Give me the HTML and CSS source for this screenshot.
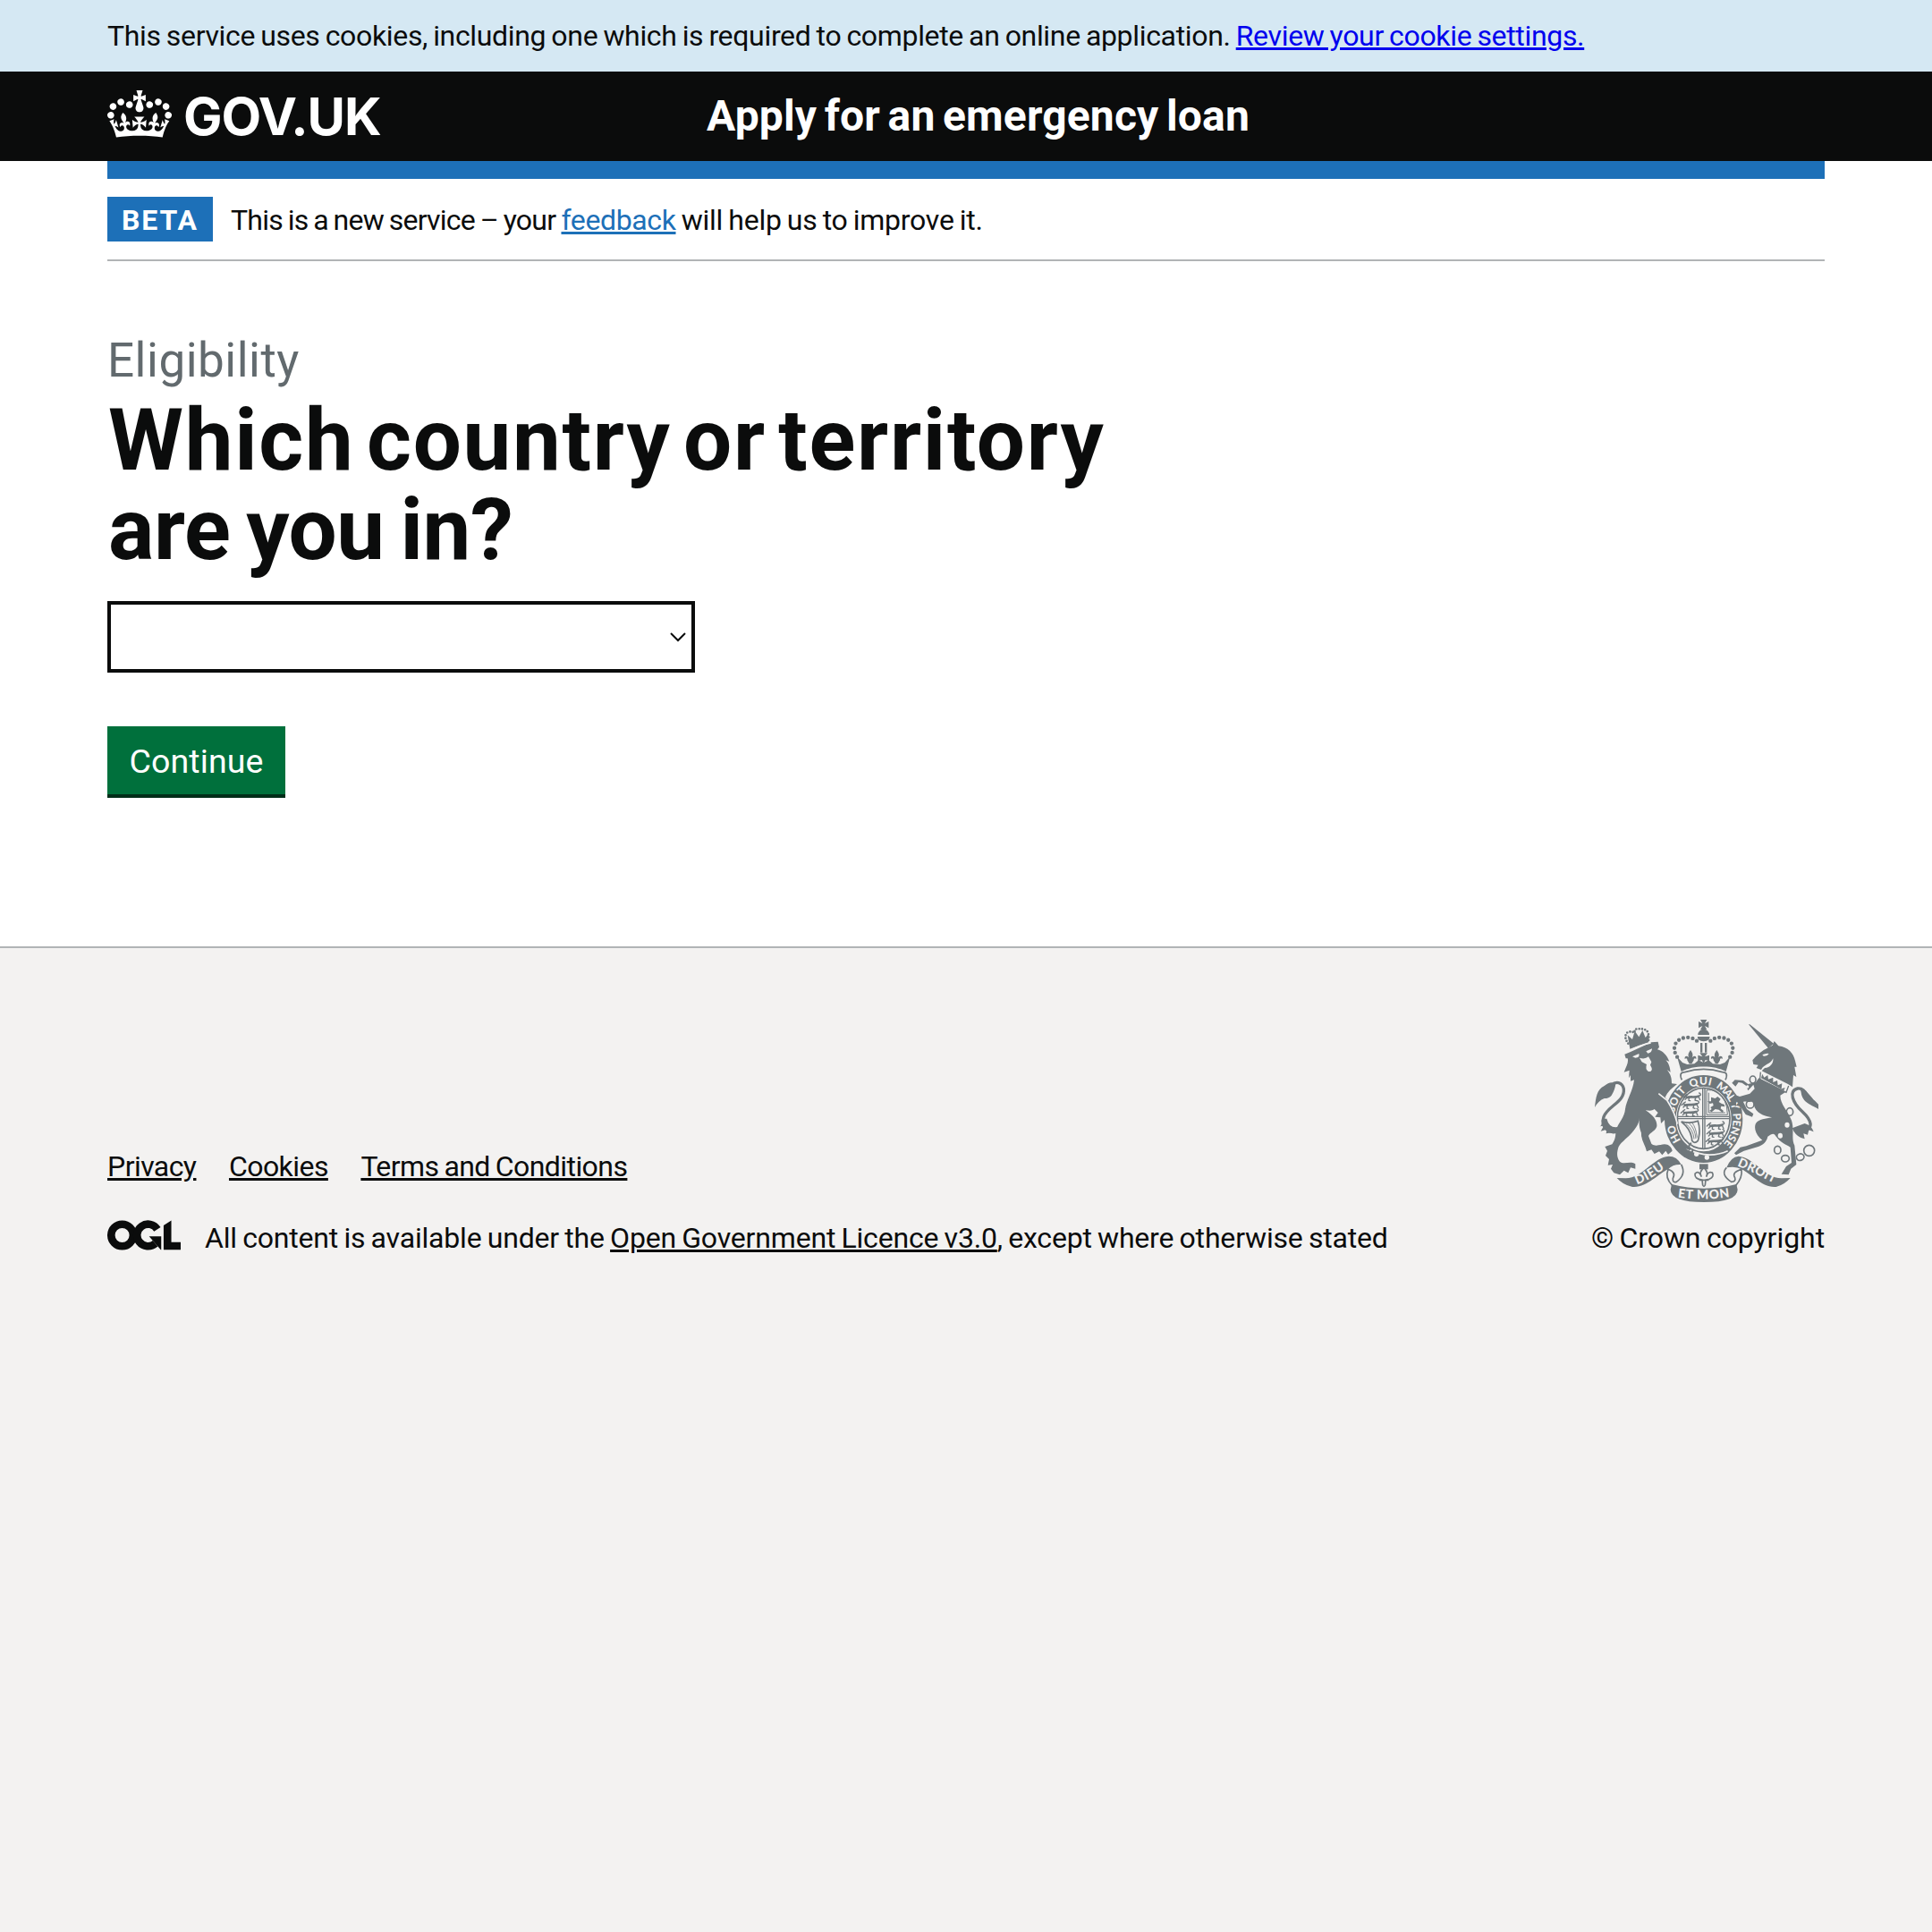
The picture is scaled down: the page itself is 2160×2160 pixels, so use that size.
FILE: index.html
```html
<!DOCTYPE html>
<html lang="en">
<head>
<meta charset="utf-8">
<title>Which country or territory are you in? - GOV.UK</title>
<link rel="stylesheet" href="styles.css">
</head>
<body>
<div class="cookie-banner">
  <p class="container cookie-text">This service uses cookies, including one which is required to complete an online application. <a class="cookie-link" href="#">Review your cookie settings.</a></p>
</div>

<header class="header">
  <div class="container header-row">
    <a class="logo" href="#">
      <svg class="crown" viewBox="0 0 132 97" aria-hidden="true">
        <path fill="currentColor" fill-rule="evenodd" d="M25 30.2c3.5 1.5 7.7-.2 9.1-3.7 1.5-3.6-.2-7.8-3.9-9.2-3.6-1.4-7.6.3-9.1 3.9-1.4 3.5.3 7.5 3.9 9zM9 39.5c3.6 1.5 7.8-.2 9.2-3.7 1.5-3.6-.2-7.8-3.9-9.1-3.6-1.5-7.6.2-9.1 3.8-1.4 3.5.3 7.5 3.8 9zM4.4 57.2c3.5 1.5 7.7-.2 9.1-3.8 1.5-3.6-.2-7.7-3.9-9.1-3.5-1.5-7.6.3-9.1 3.8-1.4 3.5.3 7.6 3.9 9.1zm38.3-21.4c3.5 1.5 7.7-.2 9.1-3.8 1.5-3.6-.2-7.7-3.9-9.1-3.6-1.5-7.6.3-9.1 3.8-1.3 3.6.4 7.7 3.9 9.1zm64.4-5.6c-3.6 1.5-7.8-.2-9.1-3.7-1.5-3.6.2-7.8 3.8-9.2 3.6-1.4 7.7.3 9.2 3.9 1.3 3.5-.4 7.5-3.9 9zm15.9 9.3c-3.6 1.5-7.7-.2-9.1-3.7-1.5-3.6.2-7.8 3.7-9.1 3.6-1.5 7.7.2 9.2 3.8 1.5 3.5-.3 7.5-3.8 9zm4.7 17.7c-3.6 1.5-7.8-.2-9.2-3.8-1.5-3.6.2-7.7 3.9-9.1 3.6-1.5 7.7.3 9.2 3.8 1.3 3.5-.4 7.6-3.9 9.1zM89.3 35.8c-3.6 1.5-7.8-.2-9.2-3.8-1.4-3.6.2-7.7 3.9-9.1 3.6-1.5 7.7.3 9.2 3.8 1.4 3.6-.3 7.7-3.9 9.1zM69.7 17.7l8.9 4.7V9.3l-8.9 2.8c-.2-.3-.5-.6-.9-.9L72.4 0H59.6l3.5 11.2c-.3.3-.6.5-.9.9l-8.8-2.8v13.1l8.8-4.7c.3.3.6.7.9.9l-5 15.4v.1c-.2.8-.4 1.6-.4 2.4 0 4.1 3.1 7.5 7 8.1h.2c.3 0 .7.1 1 .1.4 0 .7 0 1-.1h.2c4-.6 7.1-4.1 7.1-8.1 0-.8-.1-1.7-.4-2.4V34l-5.1-15.4c.4-.2.7-.6 1-.9zM66 92.8c16.9 0 32.8 1.1 47.1 3.2 4-16.9 8.9-26.7 14-33.5l-9.6-3.4c1 4.9 1.1 7.2 0 10.2-1.5-1.4-3-4.3-4.2-8.7L108.6 76c2.8-2 5-3.2 7.5-3.3-4.4 9.4-10 11.9-13.6 11.2-4.3-.8-6.3-4.6-5.6-7.9 1-4.7 5.7-5.9 8-.5 4.3-8.7-3-11.4-7.6-8.8 7.1-7.2 7.9-13.5 2.1-21.1-8 6.1-8.1 12.3-4.5 20.8-4.7-5.4-12.1-2.5-9.5 6.2 3.4-5.2 7.9-2 7.2 3.1-.6 4.3-6.4 7.8-13.5 7.2-10.3-.9-10.9-8-11.2-13.8 2.5-.5 7.1 1.8 11 7.3L80.2 60c-4.1 4.4-8 5.3-12.3 5.4 1.4-4.4 8-11.6 8-11.6H55.5s6.4 7.2 7.9 11.6c-4.2-.1-8-1-12.3-5.4l1.4 16.4c3.9-5.5 8.5-7.7 10.9-7.3-.3 5.8-.9 12.8-11.1 13.8-7.2.6-12.9-2.9-13.5-7.2-.7-5 3.8-8.3 7.1-3.1 2.7-8.7-4.6-11.6-9.4-6.2 3.7-8.5 3.6-14.7-4.6-20.8-5.8 7.6-5 13.9 2.2 21.1-4.7-2.6-11.9.1-7.7 8.8 2.3-5.5 7.1-4.2 8.1.5.7 3.3-1.3 7.1-5.7 7.9-3.5.7-9-1.8-13.5-11.2 2.5.1 4.7 1.3 7.5 3.3l-4.7-15.4c-1.2 4.4-2.7 7.2-4.3 8.7-1.1-3-.9-5.3 0-10.2l-9.5 3.4c5 6.9 9.9 16.7 14 33.5 14.8-2.1 30.8-3.2 47.7-3.2z"/>
      </svg>
      <span class="logo-text">GOV.UK</span>
    </a>
    <a class="service-name" href="#">Apply for an emergency loan</a>
  </div>
</header>

<div class="container">
  <div class="phase-banner">
    <strong class="tag">BETA</strong>
    <span class="phase-text"><span class="phase-lead">This is a new service – your</span> <a class="feedback" href="#">feedback</a> will help us to improve it.</span>
  </div>
  <main class="main">
    <span class="caption">Eligibility</span>
    <h1 class="heading"><span class="heading-top">Which country or territory</span> <span class="heading-end">are you in?</span></h1>
    <div class="select" role="combobox" aria-label="Country or territory">
      <svg class="chevron" viewBox="0 0 18 11" aria-hidden="true"><path d="M1 1l8 8 8-8" fill="none" stroke="currentColor" stroke-width="2"/></svg>
    </div>
    <button class="button" type="button">Continue</button>
  </main>
</div>

<footer class="footer">
  <div class="container footer-row">
    <div class="footer-main">
      <nav class="footer-links">
        <a href="#">Privacy</a>
        <a href="#">Cookies</a>
        <a href="#">Terms and Conditions</a>
      </nav>
      <div class="licence">
        <svg class="ogl" viewBox="0 0 483.2 195.7" aria-hidden="true">
          <g fill="none" stroke="currentColor" stroke-width="50.7">
            <circle cx="97.8" cy="97.8" r="72.5"/>
            <path d="M329.5 58.5A72.5 72.5 0 1 0 316 152"/>
          </g>
          <path fill="currentColor" d="M275 105.7h80v87.8h-3zM421.5 142.8V.1l-50.7 32.3v161.1h112.4v-50.7z"/>
        </svg>
        <span class="licence-text">All content is available under the <a href="#">Open Government Licence v3.0</a>, except where otherwise stated</span>
      </div>
    </div>
    <a class="copyright" href="#">
      <svg class="crest" viewBox="42 60 750 612" aria-hidden="true">
        <defs>
          <path id="garter" d="M407 506A99 114 0 0 1 407 278A99 114 0 0 1 407 506"/>
          <path id="dieu" d="M184 613Q228 598 286 552"/>
          <path id="mon" d="M320 656Q408 668 496 654"/>
          <path id="droit" d="M519 550Q560 566 650 612"/>
          <g id="passant" fill="none" stroke-linecap="round" stroke-linejoin="round">
            <path stroke-width="8" d="M8 9C20 5 34 10 48 5"/>
            <path stroke-width="4" d="M10 8l-7 8M16 9l-1 10 5 1M38 9l-2 9 6 2M48 6l5 11M48 4C60 2 54-5 50-6M8 8L4 2l6-4M2 4l-5 5"/>
          </g>
          <g id="fleur">
            <path d="M0-24C9-12 9-6 4 4h-8C-9-6-9-12 0-24zM-4 4C-8-8-22-6-19 6c4-4 9-2 8 4l7 12h8l7-12c-1-6 4-8 8-4C22-6 8-8 4 4z"/>
          </g>
          <path id="cross" d="M-11-17H11L4-4 17-11V11L4 4 11 17H-11L-4 4-17 11V-11L-4-4z"/>
        </defs>

        <!-- royal crown -->
        <g class="ink">
          <use href="#cross" x="407" y="77"/>
          <path d="M388 111a19 19 0 0 1 38 0zM386 117h42l-3 10q-18 12-36 0z"/>
          <path d="M396 138h7v32h-7zM411 138h7v32h-7z"/>
          <path d="M318 184l18 20 16 6 24-2 14-12 17 8 17-8 14 12 24 2 16-6 18-20-14 50c-40-22-108-22-150 0z"/>
          <use href="#fleur" x="363" y="186"/><use href="#fleur" x="451" y="186"/>
          <path d="M394 172h26l-9 12 15-5v20l-13-4-6 12-6-12-13 4v-20l15 5z"/>
        </g>
        <g class="dots"><path d="M384 131C366 114 326 114 311 144Q304 168 322 190"/><path d="M430 131C448 114 488 114 503 144Q510 168 492 190"/></g>
        <path class="line" stroke-width="5" d="M334 262Q322 236 344 236Q407 216 470 236Q492 236 480 262"/>

        <!-- garter -->
        <ellipse class="line" cx="407" cy="393" rx="112" ry="128" stroke-width="38"/>
        <path class="light-line" stroke-width="5" d="M350 492Q420 530 488 500"/>
        <g class="motto" font-size="36">
          <text><textPath href="#garter" startOffset="90">HO</textPath></text>
          <text><textPath href="#garter" startOffset="186" textLength="86">SOIT</textPath></text>
          <text><textPath href="#garter" startOffset="290" textLength="69">QUI</textPath></text>
          <text><textPath href="#garter" startOffset="376" textLength="70">MAL</textPath></text>
          <text><textPath href="#garter" startOffset="450">Y</textPath></text>
          <text><textPath href="#garter" startOffset="484" textLength="110">PENSE</textPath></text>
        </g>
        <ellipse class="line pale" cx="407" cy="391" rx="88" ry="102" stroke-width="5"/>
        <path class="line" stroke-width="4" d="M404 289v203M411 289v203M320 385h174M320 392h174"/>
        <g class="charges">
          <use href="#passant" x="342" y="312"/><use href="#passant" x="336" y="338"/><use href="#passant" x="334" y="364"/>
          <use href="#passant" x="421" y="408"/><use href="#passant" x="421" y="434"/><use href="#passant" x="418" y="460"/>
        </g>
        <path class="line" stroke-width="3" d="M417 296v83h70q0-55-36-77-16-8-34-6zM424 305v67h55"/>
        <path class="ink" d="M432 320l14 4 8-6 10 8-6 10 10 6 8 2 2 8-12-2-2 8 10 8-4 6-12-10-12-2-12 10-8-4 8-6-4-6 10-6-2-8-10 2-8-8 12 0z"/>
        <path class="line" stroke-width="5" d="M332 402q30 8 56-2 10 32 0 66-12 12-20 0-2-38-36-64z"/>
        <path class="line" stroke-width="2.5" d="M348 410q24 18 27 50M358 407q20 18 23 52M368 405q14 18 17 50"/>
        <g class="pale">
          <circle cx="383" cy="511" r="8"/><circle cx="418" cy="522" r="8"/>
          <path class="line" stroke-width="6" d="M366 474q-14 6-4 22-18-12-26 4 18 4 10 18 20-2 26-24"/>
        </g>
        <g class="ink"><path d="M393 544h29v18h-29z"/></g>
        <path class="line pale" stroke-width="5" d="M408 557q16 14 8 30 6-20 20-14 8 14-10 22-10 2-12 2l-2 18q-4 8-8 0l-2-18q-26-2-24-20 12-14 22 10-10-16 8-30zM392 598h32"/>

        <!-- lion -->
        <path class="line" stroke-width="10" d="M124 432C92 448 60 420 72 386C84 350 144 336 139 292C134 268 112 266 98 280"/>
        <g class="ink">
          <path d="M42 354C46 322 48 294 74 282Q94 264 112 274Q110 296 98 314Q90 324 74 324Q54 332 42 354zM70 392q-4 24-12 26l14-2-10 18 20-6-2 14 24-4 18 2-4-20q-28 4-36-28z"/>
          <path d="M146 190L142 176 162 168 232 136 254 134 258 152 252 160C270 164 284 180 292 200L280 196C292 208 294 222 296 236L284 228C298 244 300 258 300 274L318 276C300 290 286 302 278 320C296 340 312 370 318 400L302 416 294 402 284 410 276 396 264 408 262 388 244 386 254 372 242 360C232 368 222 364 212 364C240 382 252 400 250 418C246 434 230 436 222 450L232 476C246 488 262 478 276 478C290 478 300 488 302 500L288 512 280 500 268 514 258 502 242 510 232 496 216 502C212 482 196 462 198 440C190 420 190 408 192 390C190 412 176 430 160 446C144 462 128 474 122 486C116 504 114 522 126 536C140 548 160 532 178 544L178 560 162 556 154 574 140 566 126 580 106 574 96 560 102 546 86 548 90 528 78 516 84 500 76 486 100 478C112 460 112 446 112 432C122 404 142 388 144 360C148 330 170 300 174 262L162 266 162 246 156 256 158 230 140 236C148 216 156 204 152 190z"/>
          <path d="M160 158L222 136 224 104 212 120 202 96 190 118 176 98 168 126 152 112z"/>
        </g>
        <g class="dots small"><path d="M154 140Q138 118 150 104Q164 96 174 104L178 92Q200 88 216 96Q226 110 222 130"/></g>
        <path class="light-line" stroke-width="5" d="M158 164Q190 146 230 138M256 308L284 330Q310 370 319 410"/>
        <path class="light" d="M168 184l22-10q4 14-12 14zM214 166l20-9q0 14-14 16zM192 188q18 6 30-4l10 18-4 10q14 22-6 22-12-8-6-24l-16-8z"/>

        <!-- unicorn -->
        <path class="line" stroke-width="10" d="M728 436C786 430 766 394 738 368C706 340 690 298 722 291Q742 288 754 314"/>
        <g class="ink">
          <path d="M730 288C752 292 764 318 782 334L792 344V360C770 346 738 340 734 304zM746 408q24 8 30 28l-16-6-4 16-14-4 4 18q-30-6-42-36z"/>
          <path d="M558 76L562 76 642 140 624 156z"/>
          <path d="M624 154L638 146 644 132 658 148C690 152 708 172 714 198L719 218 712 218 718 252 708 246 705 286 690 276 602 232 612 222C630 222 642 206 640 190C630 212 610 208 600 228L584 222 590 212 574 210 571 196C584 180 602 164 624 154z"/>
          <path d="M592 256L686 300 664 314C664 344 690 366 702 398C712 430 700 460 712 482L718 546 700 560 692 580 668 578 684 552 702 540 698 488C684 478 664 474 646 446C640 440 634 444 622 452C618 470 606 480 590 486L542 500 516 514 510 508 530 488 550 484 604 464C584 450 574 424 582 408C592 394 616 392 636 388C620 384 590 380 578 354L572 334C556 340 548 332 540 336L552 360 574 376 570 386 548 378 526 344 516 332 516 350 502 344 500 324 512 312 528 318 562 308 578 292 574 278 556 298 550 282 536 272 524 270 514 284 502 272 512 262 540 264 556 276 582 270z"/>
        </g>
        <path class="light" d="M598 234L692 282 682 302 596 258z"/>
        <path class="line" stroke-width="4" d="M598 236l-2 24 88 44 8-22"/>
        <path class="ink" d="M600 256l4-14 6 12 12-8 2 14 16-6 0 16 14-6 2 16 14-6-2 18 12-4-4 10z"/>
        <path class="light" d="M604 178q12-6 22-4-6 10-18 8z"/>
        <g class="line chain" stroke-width="5">
          <ellipse cx="572" cy="261" rx="10" ry="12"/><ellipse cx="563" cy="344" rx="13" ry="13"/><ellipse cx="696" cy="369" rx="11" ry="13"/>
          <ellipse cx="655" cy="497" rx="11" ry="13"/><ellipse cx="681" cy="526" rx="13" ry="11"/><ellipse cx="731" cy="521" rx="13" ry="11" transform="rotate(-20 731 521)"/><circle cx="761" cy="499" r="18"/>
        </g>
        <g class="light"><ellipse cx="687" cy="413" rx="8" ry="9"/><ellipse cx="664" cy="449" rx="8" ry="9"/><circle cx="554" cy="285" r="5"/></g>

        <!-- motto scroll -->
        <g class="ink">
          <path d="M116 591L146 592C204 590 240 520 290 518Q318 518 332 546Q304 544 288 562C258 574 214 626 168 621Q136 614 116 591z"/>
          <path d="M698 591L668 592C610 590 574 520 524 518Q498 520 484 556Q516 550 534 562C564 574 604 626 650 621Q678 614 698 591z"/>
          <path d="M300 612Q408 640 517 612L521 630Q520 672 408 672Q298 672 296 630z"/>
        </g>
        <path class="line" stroke-width="5" d="M332 546Q350 580 316 604Q302 608 304 592Q316 572 288 562Q276 590 302 616M484 556Q462 580 500 604Q516 604 512 590Q500 572 534 562Q538 590 515 616"/>
        <g class="motto" font-size="42">
          <text><textPath href="#dieu" textLength="108">DIEU</textPath></text>
          <text><textPath href="#mon" textLength="175">ET MON</textPath></text>
          <text><textPath href="#droit" textLength="136">DROIT</textPath></text>
        </g>
      </svg>
      <span class="copyright-text">© Crown copyright</span>
    </a>
  </div>
</footer>
</body>
</html>
```
FILE: styles.css
```css
* { box-sizing: border-box; }

body {
  margin: 0;
  min-height: 2160px;
  display: flex;
  flex-direction: column;
  background: #fff;
  color: #0b0c0c;
  font-family: Roboto, "Liberation Sans", sans-serif;
  font-size: 32px;
  line-height: 40px;
  letter-spacing: -0.33px;
  word-spacing: -1.5px;
}

a {
  color: inherit;
  text-decoration-thickness: 3px;
  text-underline-offset: 2px;
}

.container { width: 1920px; margin: 0 auto; }

/* Cookie banner */
.cookie-banner { background: #d5e8f3; padding: 20px 0; }
.cookie-link { color: #00e; }

/* Header */
.header { height: 100px; background: #0b0c0c; color: #fff; }
.header-row {
  height: 120px;
  display: grid;
  grid-template-columns: 670px 1fr;
  align-items: center;
  border-bottom: 20px solid #1d70b8;
}
.header a { text-decoration: none; }
.logo { display: flex; align-items: center; gap: 13px; }
.crown { width: 72px; height: 53px; margin-top: -5px; }
.logo-text {
  font: 700 58px/60px Inter, "Liberation Sans", sans-serif;
  letter-spacing: -1.1px;
}
.service-name {
  font-size: 48px;
  font-weight: 700;
  letter-spacing: 0.15px;
  word-spacing: -3.5px;
}

/* Phase banner */
.phase-banner {
  display: flex;
  align-items: center;
  gap: 20px;
  margin-top: 20px;
  padding: 20px 0;
  border-bottom: 2px solid #b1b4b6;
}
.tag {
  width: 118px;
  padding: 6px 0 4px 16px;
  background: #1d70b8;
  color: #fff;
  letter-spacing: 1.9px;
}
.phase-text { padding-top: 2px; letter-spacing: -0.25px; }
.phase-lead { letter-spacing: -0.75px; }
.feedback { color: #1d70b8; letter-spacing: -0.38px; }

/* Question */
.main { padding: 81px 0 170px; }
.caption {
  display: block;
  margin-bottom: 9px;
  color: #626a6e;
  font-size: 53px;
  line-height: 60px;
  letter-spacing: 0.5px;
  word-spacing: 0;
}
.heading {
  margin: 0 0 30px;
  padding-left: 1px;
  font-size: 96px;
  font-weight: 700;
  line-height: 100px;
}
.heading span { display: block; }
.heading-top { letter-spacing: 1.7px; word-spacing: -12px; }
.heading-end { letter-spacing: -0.3px; word-spacing: -6px; }
.select {
  width: 657px;
  height: 80px;
  margin-bottom: 60px;
  padding-right: 6px;
  display: flex;
  align-items: center;
  justify-content: flex-end;
  border: 4px solid #0b0c0c;
}
.chevron { width: 18px; height: 11px; }
.button {
  display: block;
  width: 199px;
  height: 76px;
  padding: 2px 0 0;
  border: 0;
  background: #00703c;
  box-shadow: 0 4px 0 #002d18;
  color: #fff;
  font: 400 37.5px/74px Roboto, "Liberation Sans", sans-serif;
  letter-spacing: 0.1px;
}

/* Footer */
.footer {
  flex: 1;
  padding-top: 80px;
  border-top: 2px solid #b1b4b6;
  background: #f3f2f1;
}
.footer-row { display: flex; justify-content: space-between; align-items: flex-end; }
.footer-links { display: flex; gap: 36.5px; margin-bottom: 40px; letter-spacing: -0.56px; }
.licence { display: flex; align-items: flex-start; gap: 27px; letter-spacing: -0.18px; }
.ogl { width: 82px; height: 34px; }
.copyright {
  display: flex;
  flex-direction: column;
  align-items: center;
  gap: 20px;
  width: 261px;
  text-decoration: none;
  letter-spacing: -0.05px;
  white-space: nowrap;
}

/* Royal arms */
.crest { width: 250px; height: 204px; margin-right: 3px; color: #6f777b; letter-spacing: 0; word-spacing: 0; }
.ink { fill: currentColor; }
.light { fill: #f3f2f1; }
.line { fill: none; stroke: currentColor; }
.light-line { fill: none; stroke: #f3f2f1; }
.pale { fill: #f3f2f1; }
.charges { stroke: currentColor; }
.dots { fill: none; stroke: currentColor; stroke-width: 13; stroke-linecap: round; stroke-dasharray: 0 16; }
.small { stroke-width: 8; stroke-dasharray: 0 10; }
.motto { fill: #f3f2f1; font-family: Lato, sans-serif; font-weight: 900; }
```
